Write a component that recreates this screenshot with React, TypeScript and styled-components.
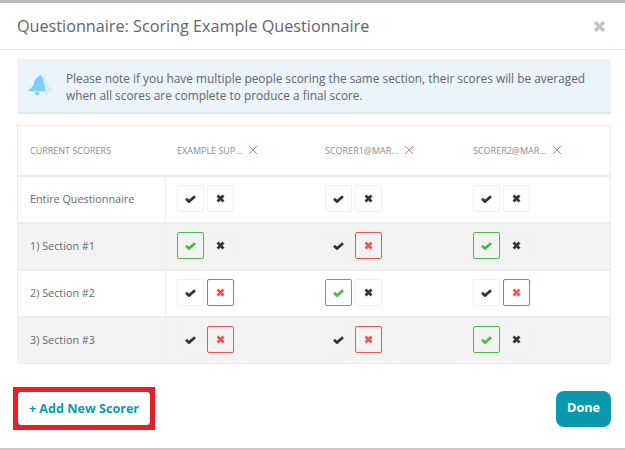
import React from "react";
import styled, { createGlobalStyle } from "styled-components";

type Mark = "yes" | "no" | "none";

const scorers = ["EXAMPLE SUP...", "SCORER1@MAR...", "SCORER2@MAR..."];

const rows: { label: string; marks: Mark[]; shaded: boolean }[] = [
  { label: "Entire Questionnaire", marks: ["none", "none", "none"], shaded: false },
  { label: "1) Section #1", marks: ["yes", "no", "yes"], shaded: true },
  { label: "2) Section #2", marks: ["no", "yes", "no"], shaded: false },
  { label: "3) Section #3", marks: ["no", "no", "yes"], shaded: true },
];

const BellIcon = () => (
  <BellSvg viewBox="0 0 28 26">
    <path
      d="M15 2c4 1 5 4 6 8 .6 3 3 5 6 7 .4.6-.4 1.400-1 1.500l-9 1.500z"
      fill="#cfeefc"
    />
    <path
      d="M14 1c-1.500 0-2 1-2.500 2C8 4 7 7 6.500 10 6 13 4 15 1 17c-.6.600-.2 1.600.6 1.600L19 19c-1-4-1.500-12-5-18z"
      fill="#7ad0fb"
    />
    <path d="M7 19.500c0 2.500 2 4 4 3.500 1.300-.4 1.600-1.800 1.400-3z" fill="#7ad0fb" />
    <path d="M16.500 20c.2 2 1.500 3 3 2.800 1.300-.2 2-1.500 2-3.400z" fill="#cfeefc" />
  </BellSvg>
);

const CheckIcon = () => (
  <CheckSvg viewBox="0 0 11 8">
    <path d="M1 3.800L4 6.600L10 1.200" />
  </CheckSvg>
);

const CrossIcon = () => (
  <CrossSvg viewBox="0 0 9 9">
    <path d="M1.500 1.500L7.500 7.500M7.500 1.500L1.500 7.500" />
  </CrossSvg>
);

const App: React.FC = () => {
  return (
    <Modal>
      <GlobalStyle />
      <Header>
        <Title>Questionnaire: Scoring Example Questionnaire</Title>
        <CloseIcon viewBox="0 0 13 13">
          <path d="M2 2L11 11M11 2L2 11" />
        </CloseIcon>
      </Header>

      <Body>
        <Notice>
          <BellIcon />
          <NoticeText>
            Please note if you have multiple people scoring the same section, their scores will be
            averaged when all scores are complete to produce a final score.
          </NoticeText>
        </Notice>

        <ScoreTable>
          <HeadRow>
            <HeadFirst>
              <HeadLabel>CURRENT SCORERS</HeadLabel>
            </HeadFirst>
            {scorers.map((name) => (
              <HeadCell key={name}>
                <HeadLabel>{name}</HeadLabel>
                <RemoveIcon viewBox="0 0 10 10">
                  <path d="M1 1l8 8M9 1l-8 8" />
                </RemoveIcon>
              </HeadCell>
            ))}
          </HeadRow>
          {rows.map((row) => (
            <Row key={row.label} $shaded={row.shaded}>
              <LabelCell>{row.label}</LabelCell>
              {row.marks.map((mark, index) => (
                <ChoiceCell key={index}>
                  <Choice $mark={mark} $kind="yes">
                    <CheckIcon />
                  </Choice>
                  <Choice $mark={mark} $kind="no">
                    <CrossIcon />
                  </Choice>
                </ChoiceCell>
              ))}
            </Row>
          ))}
        </ScoreTable>
      </Body>

      <Footer>
        <Highlight>
          <AddButton>+ Add New Scorer</AddButton>
        </Highlight>
        <DoneButton>Done</DoneButton>
      </Footer>
    </Modal>
  );
};

const GlobalStyle = createGlobalStyle`
  html, body {
    margin: 0;
    padding: 0;
    background: #fff;
  }
  * {
    box-sizing: border-box;
  }
`;

const Modal = styled.div`
  width: 625px;
  height: 450px;
  display: flex;
  flex-direction: column;
  overflow: hidden;
  background: #fff;
  border-top: 3px solid #b7babd;
  border-bottom: 2px solid #c9c9c9;
  font-family: "Open Sans", sans-serif;
  color: #5f6368;
`;

const Header = styled.div`
  height: 47px;
  flex: none;
  display: flex;
  align-items: center;
  justify-content: space-between;
  padding: 0 19px 0 17px;
  border-bottom: 1px solid #e3e3e3;
`;

const Title = styled.div`
  font-size: 16.2px;
  color: #60666b;
`;

const CloseIcon = styled.svg`
  width: 13px;
  height: 13px;
  fill: none;
  stroke: #c6c6c6;
  stroke-width: 3.6;
`;

const Body = styled.div`
  padding: 9px 14px 0 17px;
`;

const Notice = styled.div`
  height: 55px;
  display: flex;
  align-items: center;
  gap: 11px;
  padding: 0 20px 0 10px;
  background: #ebf3fb;
  border-bottom: 2px solid #d8e8f6;
  border-radius: 2px;
`;

const BellSvg = styled.svg`
  flex: none;
  width: 28px;
  height: 24px;
`;

const NoticeText = styled.div`
  margin-top: 3px;
  font-size: 11.85px;
  line-height: 17px;
  color: #62676b;
`;

const ScoreTable = styled.div`
  margin-top: 11px;
  border: 1px solid #ededed;
`;

const HeadRow = styled.div`
  height: 49px;
  display: grid;
  grid-template-columns: repeat(4, 148px);
  align-items: center;
`;

const HeadFirst = styled.div`
  display: flex;
  align-items: center;
  padding-left: 12px;
`;

const Row = styled.div<{ $shaded: boolean }>`
  height: 47px;
  display: grid;
  grid-template-columns: repeat(4, 148px);
  background: ${(p) => (p.$shaded ? "#f3f3f3" : "#fff")};
  border-top: 2px solid #eeeeee;
`;

const LabelCell = styled.div`
  display: flex;
  align-items: center;
  padding: 0 0 2px 12px;
  font-size: 10.8px;
  color: #666a6e;
  border-right: 1px solid #eeeeee;
`;

const HeadCell = styled.div`
  display: flex;
  align-items: center;
  gap: 6px;
  padding-left: 11px;
`;

const HeadLabel = styled.span`
  font-size: 9px;
  color: #8a8d90;
`;

const RemoveIcon = styled.svg`
  width: 10px;
  height: 10px;
  margin-top: -2px;
  fill: none;
  stroke: #ee7b84;
  stroke-width: 1;
`;

const ChoiceCell = styled.div`
  display: flex;
  align-items: flex-start;
  gap: 3px;
  padding: 8px 0 0 11px;
`;

const activeColor = { yes: "#4cbb45", no: "#ee5555" };

const Choice = styled.div<{ $mark: Mark; $kind: "yes" | "no" }>`
  width: 27px;
  height: 27px;
  display: flex;
  align-items: center;
  justify-content: center;
  border-radius: 2px;
  color: ${(p) => (p.$mark === p.$kind ? activeColor[p.$kind] : "#333")};
  border: 1px solid ${(p) => (p.$mark === p.$kind ? activeColor[p.$kind] : "#f1f1f1")};
`;

const CheckSvg = styled.svg`
  width: 11px;
  height: 8px;
  fill: none;
  stroke: currentColor;
  stroke-width: 2.7;
`;

const CrossSvg = styled.svg`
  width: 9px;
  height: 9px;
  fill: none;
  stroke: currentColor;
  stroke-width: 2.8;
`;

const Footer = styled.div`
  flex: 1;
  display: flex;
  align-items: flex-start;
  justify-content: space-between;
  padding: 23px 14px 0 13px;
`;

const Highlight = styled.div`
  width: 142px;
  height: 43px;
  border: 5px solid #ed1c24;
  background: #0b9aad;
`;

const AddButton = styled.div`
  height: 100%;
  display: flex;
  align-items: center;
  justify-content: center;
  background: #fff;
  border-radius: 4px;
  font-size: 12.6px;
  font-weight: 700;
  color: #0b9aad;
`;

const DoneButton = styled.div`
  width: 55px;
  height: 36px;
  margin-top: 4px;
  padding-bottom: 4px;
  display: flex;
  align-items: center;
  justify-content: center;
  background: #0b9aad;
  border-radius: 8px;
  font-size: 12.6px;
  font-weight: 700;
  color: #fff;
`;

export default App;
